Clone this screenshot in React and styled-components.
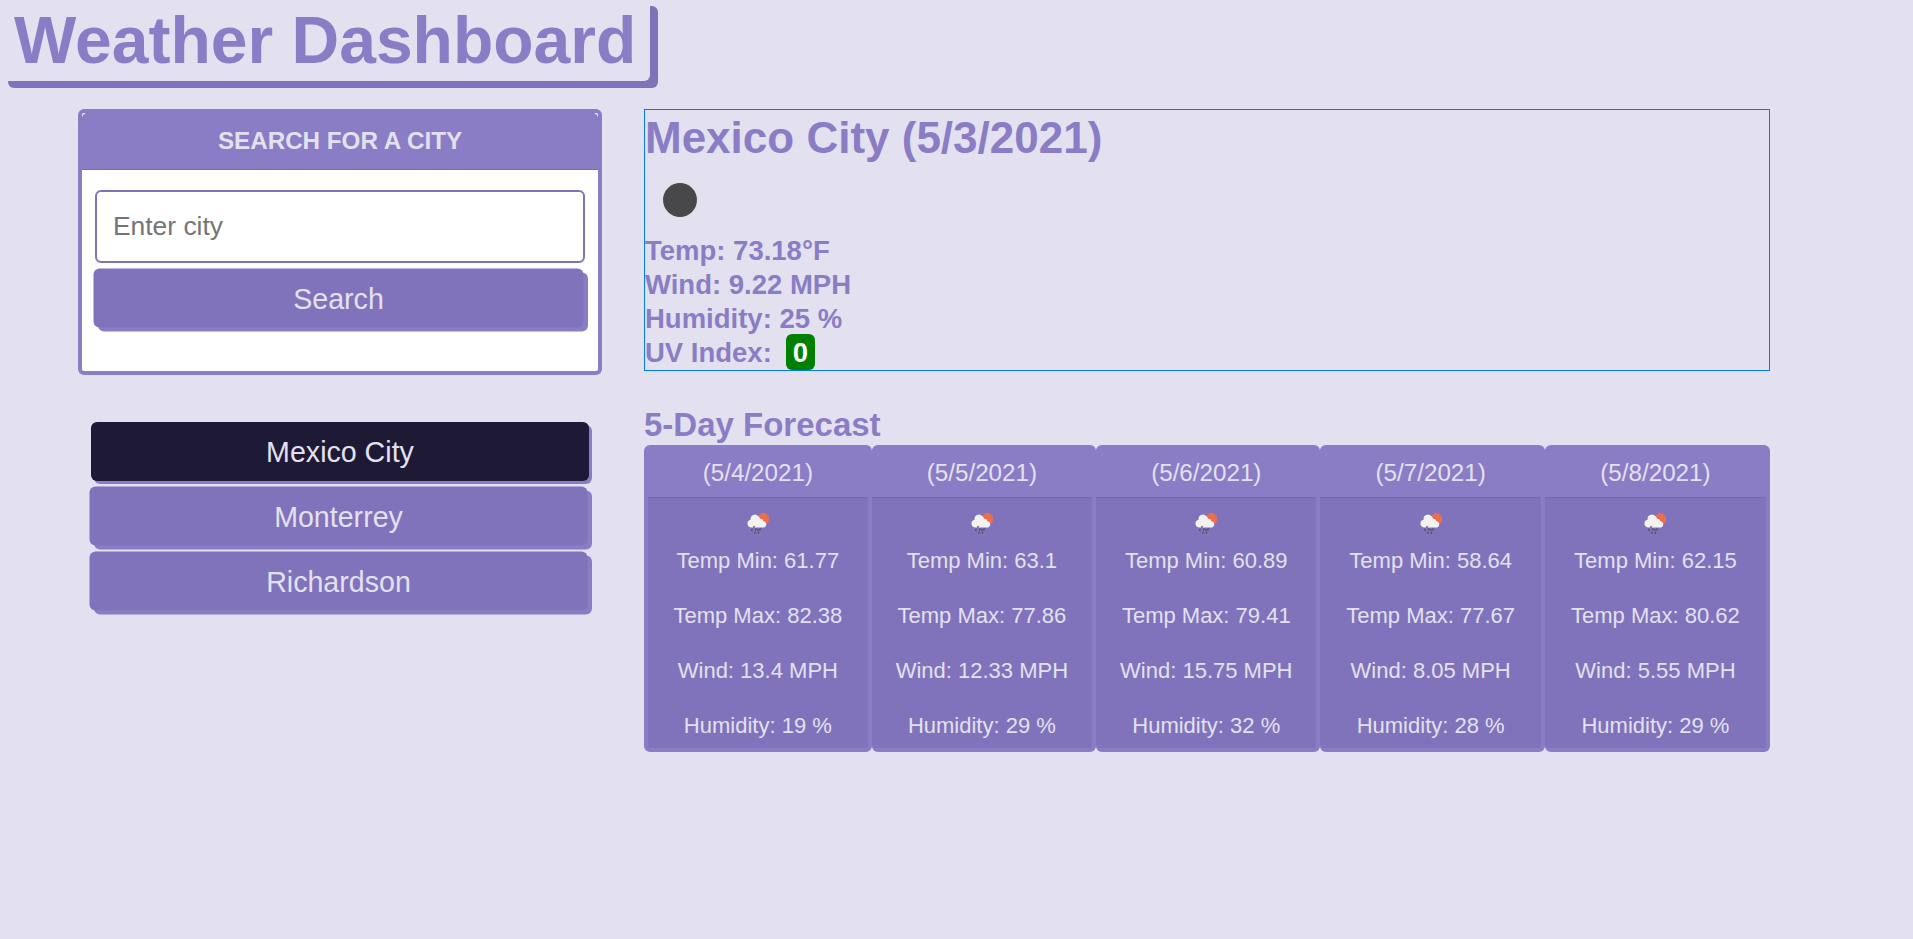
import React from "react";
import styled, { createGlobalStyle } from "styled-components";

const light = "#8a7dc5";
const dark = "#8073bb";
const pale = "#e3e1ef";

const Global = createGlobalStyle`
  *, *::before, *::after { box-sizing: border-box; }
  html { font-size: 22px; }
  body {
    margin: 0;
    min-height: 100vh;
    background: ${pale};
    color: ${light};
    font-family: Arial, "Liberation Sans", sans-serif;
    line-height: 1.5;
    overflow: hidden;
  }
  #root { display: flow-root; }
  h1, h2, h3, h4, p { margin: 0; }
`;

const Title = styled.h1`
  width: 650px;
  height: 82px;
  margin-top: -1px;
  padding-left: 14px;
  font-size: 3rem;
  line-height: 82px;
  white-space: nowrap;
  border-radius: 6px;
  box-shadow: 8px 7px 0 ${dark};
`;

const Columns = styled.main`
  display: flex;
  align-items: flex-start;
  padding: 28px 143px 0 78px;
  gap: 42px;
`;

const Sidebar = styled.aside`
  width: 524px;
  flex: none;
`;

const SearchCard = styled.section`
  height: 266px;
  border: 4px solid ${light};
  border-radius: 6px;
  background: #fff;
`;

const SearchHeader = styled.h2`
  height: 57px;
  padding-top: 1px;
  border-bottom: 1px solid #766ab0;
  border-radius: 5px 5px 0 0;
  background: ${light};
  color: ${pale};
  font-size: 1.1rem;
  line-height: 54px;
  text-align: center;
  text-transform: uppercase;
`;

const SearchForm = styled.div`
  display: flex;
  flex-direction: column;
  gap: 6px;
  padding: 20px 13px 0;
`;

const CityInput = styled.input`
  width: 490px;
  height: 73px;
  padding: 0 16px;
  border: 2px solid ${dark};
  border-radius: 6px;
  background: #fff;
  font: 1.2rem Arial, "Liberation Sans", sans-serif;
  &::placeholder { color: #757575; opacity: 1; }
`;

const Button = styled.button`
  display: block;
  width: ${(p) => p.$width}px;
  height: 59px;
  padding: 0;
  border: 0;
  border-radius: 6px;
  background: ${(p) => (p.$active ? "#1e1935" : dark)};
  color: ${pale};
  font: 1.3rem/60px Arial, "Liberation Sans", sans-serif;
  text-align: center;
  box-shadow: ${(p) => (p.$active ? "3px 3px" : "4.5px 4px")} 0 ${light};
  transform: ${(p) => (p.$active ? "none" : "translate(-1.5px, -0.5px)")};
`;

const History = styled.nav`
  display: flex;
  flex-direction: column;
  gap: 6px;
  padding: 47px 0 0 13px;
`;

const Content = styled.div`
  flex: 1;
  min-width: 0;
`;

const Current = styled.section`
  height: 262px;
  border: 1px solid #007bff;
`;

const CityName = styled.h2`
  font-size: 2rem;
  line-height: 56px;
`;

const MoonRow = styled.div`
  height: 68px;
  padding: 17px 0 0 18px;
`;

const Moon = styled.svg`
  display: block;
`;

const Reading = styled.h4`
  display: flex;
  align-items: center;
  height: 34px;
  font-size: 1.25rem;
  line-height: 34px;
`;

const UvBadge = styled.span`
  width: 29px;
  height: 36px;
  margin: -2px 0 0 14px;
  border-radius: 6px;
  background: #008000;
  color: #fff;
  line-height: 38px;
  text-align: center;
`;

const ForecastTitle = styled.h3`
  padding-top: 34px;
  font-size: 1.5rem;
  line-height: 40px;
`;

const CardGroup = styled.section`
  display: grid;
  grid-template-columns: 227.7px repeat(3, 224.4px) 1fr;
`;

const DayCard = styled.article`
  height: 307px;
  border: 4px solid ${light};
  border-radius: 6px;
  background: ${dark};
  color: ${pale};
  text-align: center;
  & + & { border-left: 0; }
`;

const DayHeader = styled.div`
  height: 49px;
  border-bottom: 1px solid #776bb0;
  background: ${light};
  font-size: 1.1rem;
  line-height: 47px;
`;

const DayBody = styled.div`
  display: flex;
  flex-direction: column;
  align-items: center;
  gap: 22px;
`;

const DayIcon = styled.svg`
  display: block;
  width: 24px;
  height: 24px;
  margin: 14px 0 -14px;
`;

const Stat = styled.p`
  line-height: 33px;
`;

const days = [
  ["(5/4/2021)", "61.77", "82.38", "13.4", "19"],
  ["(5/5/2021)", "63.1", "77.86", "12.33", "29"],
  ["(5/6/2021)", "60.89", "79.41", "15.75", "32"],
  ["(5/7/2021)", "58.64", "77.67", "8.05", "28"],
  ["(5/8/2021)", "62.15", "80.62", "5.55", "29"],
];

function RainIcon() {
  return (
    <DayIcon viewBox="0 0 24 24">
      <circle cx="17.5" cy="6.9" r="5.8" fill="#ec6e4c" />
      <path
        d="M5 15.4a3.9 3.9 0 0 1-.4-7.7A4.4 4.4 0 0 1 12.2 4a4 4 0 0 1 1.8 2.8 3.6 3.6 0 0 1 3.6 2.4 3.2 3.2 0 0 1 .6 6.2z"
        fill="#f2f2f2"
      />
      <path
        d="M8.2 14.4l-.4 1M6.2 17.2l-.5 1.2M10 16.6l-.5 1.3M14.2 16.8l-.5 1.3M12 17.4l-.4 1M9.2 20.2l-.4 1M12.6 20.4l-.4 1"
        stroke="#48484a"
        strokeWidth="1.2"
        strokeLinecap="round"
      />
    </DayIcon>
  );
}

export default function App() {
  return (
    <>
      <Global />
      <Title>Weather Dashboard</Title>
      <Columns>
        <Sidebar>
          <SearchCard>
            <SearchHeader>Search for a city</SearchHeader>
            <SearchForm>
              <CityInput placeholder="Enter city" />
              <Button $width={490}>Search</Button>
            </SearchForm>
          </SearchCard>
          <History>
            <Button $width={498} $active>Mexico City</Button>
            <Button $width={498}>Monterrey</Button>
            <Button $width={498}>Richardson</Button>
          </History>
        </Sidebar>
        <Content>
          <Current>
            <CityName>Mexico City (5/3/2021)</CityName>
            <MoonRow>
              <Moon width="34" height="34" viewBox="0 0 34 34">
                <circle cx="17" cy="17" r="17" fill="#48484a" />
              </Moon>
            </MoonRow>
            <Reading>Temp: 73.18°F</Reading>
            <Reading>Wind: 9.22 MPH</Reading>
            <Reading>Humidity: 25 %</Reading>
            <Reading>
              UV Index: <UvBadge>0</UvBadge>
            </Reading>
          </Current>
          <ForecastTitle>5-Day Forecast</ForecastTitle>
          <CardGroup>
            {days.map(([date, min, max, wind, humidity]) => (
              <DayCard key={date}>
                <DayHeader>{date}</DayHeader>
                <DayBody>
                  <RainIcon />
                  <Stat>Temp Min: {min}</Stat>
                  <Stat>Temp Max: {max}</Stat>
                  <Stat>Wind: {wind} MPH</Stat>
                  <Stat>Humidity: {humidity} %</Stat>
                </DayBody>
              </DayCard>
            ))}
          </CardGroup>
        </Content>
      </Columns>
    </>
  );
}
